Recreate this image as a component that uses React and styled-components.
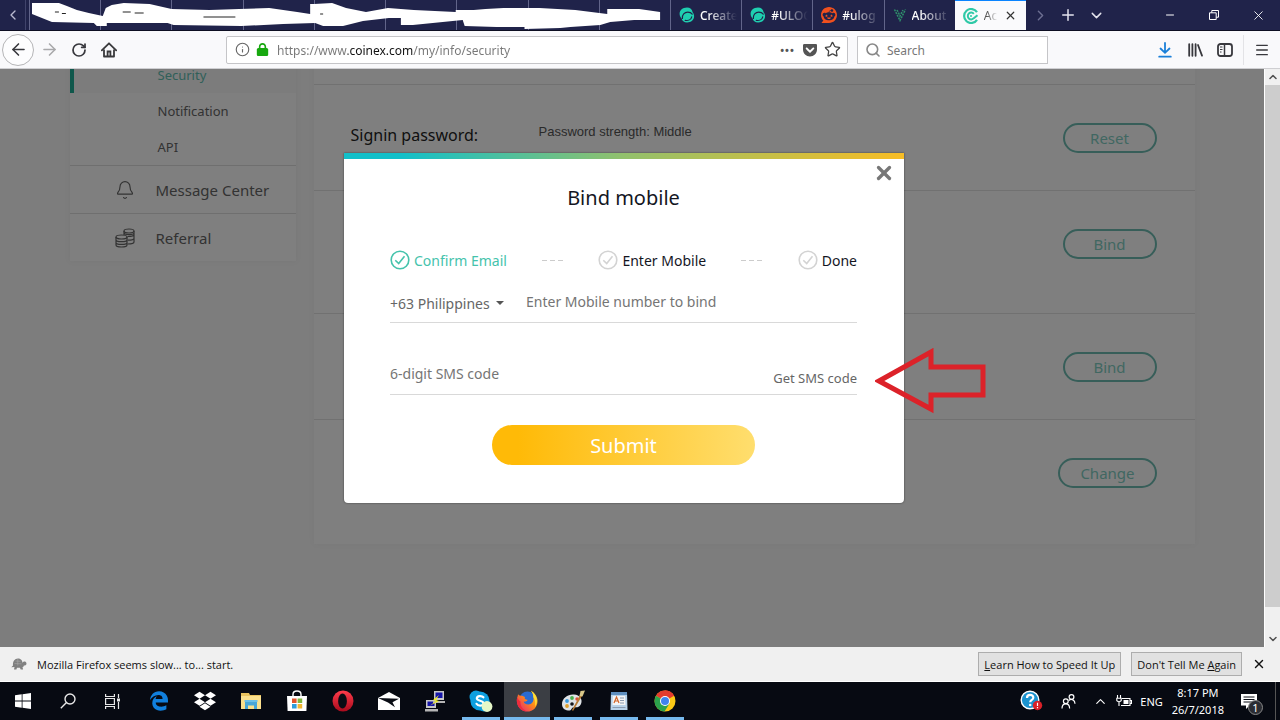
import React from "react";
import styled, { createGlobalStyle, css } from "styled-components";
import {
  ArrowLeft,
  ArrowRight,
  Bell,
  ChevronDown,
  ChevronLeft,
  ChevronRight,
  ChevronUp,
  Info,
  Menu,
  Minus,
  Plus,
  RotateCw,
  Search,
  Star,
  X,
} from "lucide-react";
import { FaDropbox, FaEdgeLegacy, FaGetPocket, FaLock, FaReddit } from "react-icons/fa6";

/* ---------- icons ---------- */

const SteemIcon = () => (
  <svg width="16" height="16" viewBox="0 0 16 16">
    <path
      d="M8 .6C3.600.6.6 3.400.6 6.800c0 2.200 1 3.500 1.900 4.500.4 2.500 2.600 4.200 5.600 4.200 4 0 7-2.800 7-6.200 0-2-.8-3.300-1.500-4.100C13.200 2.400 11.100.6 8 .6z"
      fill="#1fcfb0"
    />
    <path
      d="M3.400 11.500C3 7.800 5.500 5.200 8.800 5.200c2 0 3.600.8 4.400 2M6.200 13.300c3 .6 5.900-.8 6.500-3.500"
      fill="none"
      stroke="#20234a"
      strokeWidth="1.200"
      strokeLinecap="round"
    />
  </svg>
);

const VesselIcon = () => (
  <svg width="14" height="14" viewBox="0 0 14 14" fill="none" stroke="#2f8f6b" strokeWidth="1.500">
    <path d="M1.500 1.500 7 12.500l5.500-11M4 2l3 6 3-6" strokeDasharray="2 1" />
  </svg>
);

const CoinExIcon = () => (
  <svg width="16" height="16" viewBox="0 0 16 16" fill="none" stroke="#2fc9a7">
    <path d="M14 4.200A7 7 0 1 0 14 11.800" strokeWidth="2.200" />
    <path d="M10.800 5.800A3.400 3.400 0 1 0 10.800 10.200L14.500 7.200" strokeWidth="2" />
    <circle cx="8" cy="8" r="1" fill="#2fc9a7" stroke="none" />
  </svg>
);

const HomeIcon = () => (
  <svg width="16" height="16" viewBox="0 0 16 16" fill="none" stroke="#3a3a3c" strokeWidth="1.800">
    <path d="M.8 8.300 8 1.300l7.200 7" strokeLinecap="round" strokeLinejoin="round" />
    <path d="M3 7.500v7h10v-7" strokeLinejoin="round" />
    <path d="M6.600 14.500V9.500h2.800v5" />
  </svg>
);

const LibraryIcon = () => (
  <svg width="15" height="14" viewBox="0 0 15 14" fill="none" stroke="#38383d" strokeWidth="1.800" strokeLinecap="round">
    <path d="M1.200 1.200v11.600M4.400 1.200v11.600M7.600 1.200v11.600M10 2l4 10.600" />
  </svg>
);

const SidebarIcon = () => (
  <svg width="16" height="14" viewBox="0 0 16 14" fill="none" stroke="#38383d">
    <rect x="1" y="1" width="14" height="12" rx="2.500" strokeWidth="1.800" />
    <path d="M7.500 1v12" strokeWidth="1.500" />
    <path d="M3 4h2.500M3 6.500h2.500M3 9h1.500" strokeWidth="1" />
  </svg>
);

const DownloadIcon = () => (
  <svg width="14" height="16" viewBox="0 0 14 16" fill="none" stroke="#1a7fd8" strokeWidth="1.800" strokeLinecap="round">
    <path d="M7 1v9.500M2.500 6.500 7 10.800l4.500-4.300M1.200 14.700h11.600" />
  </svg>
);

const RestoreIcon = () => (
  <svg width="10" height="10" viewBox="0 0 10 10" fill="none" stroke="#fff">
    <path d="M.5 2.800h6.700v6.700H.5zM2.800 2.800V.5h6.700v6.700H7.200" />
  </svg>
);

const CoinsIcon = () => (
  <svg width="20" height="20" viewBox="0 0 20 20" fill="none" stroke="#666" strokeWidth="1.200">
    <ellipse cx="14" cy="3" rx="5" ry="2" />
    <path d="M9 3v4M19 3v11c0 1.200-2.500 2-6.500 2M19 6.500c0 1.200-2.500 2-6.500 2M19 10.200c0 1.200-2.500 2-6.500 2M9 5c.5 1 2 1.600 5 1.600s5-.8 5-1.800" />
    <ellipse cx="6.500" cy="9" rx="5.500" ry="2" />
    <path d="M1 9v8c0 1.200 2.400 2 5.500 2s5.500-.8 5.500-2V9M1 11.700c0 1.200 2.400 2 5.500 2s5.500-.8 5.500-2M1 14.400c0 1.200 2.400 2 5.500 2s5.500-.8 5.500-2" />
  </svg>
);

const StepIcon = ({ color }) => (
  <svg width="20" height="20" viewBox="0 0 20 20" fill="none" stroke={color} strokeWidth="1.600">
    <circle cx="10" cy="10" r="8.800" />
    <path d="m5.300 10.200 3.400 3.300 5.800-7.200" />
  </svg>
);

const TurtleIcon = () => (
  <svg width="16" height="14" viewBox="0 0 16 14" fill="#808080">
    <path d="M2 8.500C1.500 4.500 3.700 1.500 7 1.500S11.500 4 11.500 6c.3-1.200 1.300-1.700 2.300-1.500C15 4.700 15.800 6 15.400 7.200c-.3 1-1.500 1.300-2.500 1.200-.2 1-.8 1.500-1.400 1.700l.6 2.400h-2.400l-.8-1.800H6l-.6 1.800H3l.5-2.500L.3 10.300z" />
    <path d="m4.500 4 5 .3M3.500 6.500l7 .3M6.800 2v6.500" stroke="#a9a9a9" strokeWidth=".6" />
  </svg>
);

const WindowsIcon = () => (
  <svg width="16" height="16" viewBox="0 0 16 16" fill="#fff">
    <path d="M0 2.300 6.700 1.300v6.200H0zM7.500 1.200 16 0v7.500H7.500zM0 8.400h6.700v6.300L0 13.700zM7.500 8.400H16V16l-8.500-1.200z" />
  </svg>
);

const TaskSearchIcon = () => (
  <svg width="16" height="16" viewBox="0 0 16 16" fill="none" stroke="#e8e8e8" strokeWidth="1.400">
    <circle cx="10" cy="6" r="5" />
    <path d="M6.500 9.500.8 15.200" />
  </svg>
);

const TaskViewIcon = () => (
  <svg width="17" height="15" viewBox="0 0 17 15" fill="none" stroke="#e8e8e8" strokeWidth="1.200">
    <path d="M1.600 0v2.500h8.800V0M1.600 15v-2.500h8.800V15M1.600 4.500h8.800v6H1.600zM14.500 0v4M14.500 8v7" />
    <path d="M13 4.500h3v3h-3z" fill="#e8e8e8" stroke="none" />
  </svg>
);

const FolderIcon = () => (
  <svg width="22" height="18" viewBox="0 0 22 18">
    <path d="M1 1h8l1 2h11v14H1z" fill="#e9c25e" />
    <path d="M1 4h20v13H1z" fill="#fbe08d" />
    <path d="M5 9h12v8h-3v-3.500H8V17H5z" fill="#49a7d8" />
    <path d="M4.500 8h13v2h-13z" fill="#6cc0e8" />
  </svg>
);

const StoreIcon = () => (
  <svg width="22" height="22" viewBox="0 0 22 22">
    <path d="M7 7V4.500c0-4.600 8-4.600 8 0V7" fill="none" stroke="#fff" strokeWidth="1.400" />
    <path d="M1 6h20l-.6 15H1.600z" fill="#fff" />
    <path d="M6 8.500h4.600V13H6z" fill="#e1542c" />
    <path d="M11.600 8.500h4.600V13h-4.600z" fill="#7fb63c" />
    <path d="M6 14h4.600v4.500H6z" fill="#2d9cdb" />
    <path d="M11.600 14h4.600v4.500h-4.600z" fill="#f2b632" />
  </svg>
);

const OperaIcon = () => (
  <svg width="22" height="22" viewBox="0 0 22 22">
    <defs>
      <linearGradient id="opera" x1="0" y1="0" x2="0" y2="1">
        <stop offset="0" stopColor="#ff3c4b" />
        <stop offset="1" stopColor="#a80a1c" />
      </linearGradient>
    </defs>
    <circle cx="11" cy="11" r="10.500" fill="url(#opera)" />
    <ellipse cx="10.500" cy="11" rx="4.400" ry="7.600" fill="#090c14" />
  </svg>
);

const MailIcon = () => (
  <svg width="24" height="20" viewBox="0 0 24 20">
    <path d="M1 7 12 1l11 6v12H1z" fill="#fff" />
    <path d="m1 7 21 .8-6.500 3.500 2.500 5L11 11.500z" fill="#090c14" />
  </svg>
);

const PuttyIcon = () => (
  <svg width="22" height="22" viewBox="0 0 22 22">
    <path d="M10 1h10v9H10zM2 10h10v8H2z" fill="#c8c8c8" />
    <path d="M11.500 2.500h7v5.500h-7zM3.500 11.500h7v4.500h-7z" fill="#1515a8" />
    <path d="M9 11h12v2H9zM1 19h13v2.500H1z" fill="#b5b5b5" />
    <path d="m15 5-6 5 3 1-6 4.500 9-4.500-3-1z" fill="#f4ee1e" />
  </svg>
);

const SkypeIcon = () => (
  <svg width="24" height="22" viewBox="0 0 24 22">
    <circle cx="7" cy="7" r="6.500" fill="#0e9fdf" />
    <circle cx="11" cy="11" r="9.600" fill="#0e9fdf" />
    <circle cx="15" cy="15" r="6.500" fill="#0e9fdf" />
    <path
      d="M14.400 7.300C13 5.500 8 5.500 7.800 8.300c-.1 3 6.800 1.800 6.700 5-.1 3-5.600 3-7 .5"
      fill="none"
      stroke="#fff"
      strokeWidth="2.200"
      strokeLinecap="round"
    />
    <circle cx="18" cy="16.500" r="5.400" fill="#e5f8c8" />
  </svg>
);

const FirefoxIcon = () => (
  <svg width="22" height="22" viewBox="0 0 22 22">
    <defs>
      <linearGradient id="fox" x1="1" y1="0" x2="0" y2="1">
        <stop offset="0" stopColor="#ffd52e" />
        <stop offset=".45" stopColor="#ff8a16" />
        <stop offset="1" stopColor="#e31587" />
      </linearGradient>
    </defs>
    <circle cx="11.500" cy="9.500" r="8" fill="#2a6bd0" />
    <path
      d="M2 4c0 1-.2 2-.8 3.500C-.5 14 3.500 21.500 11 21.500S22.500 15 21.300 9C20.700 5.500 18 2.500 15 .8c1.500 2 2.500 4 2.300 6.200.8 3-.3 7.500-5 7.500-3 0-4.800-1.700-4.500-3 1.500.5 3-.3 3.800-1.600-2.800-.3-3.300-1.400-2.600-3C7 6 5.500 5.500 4.800 5.700 3.500 5.500 2.500 5 2 4z"
      fill="url(#fox)"
    />
    <path d="M15 .8c6 4 7.500 10.500 4 16 .5-4 .3-7-1.700-9.800C17.500 4.800 16.500 2.800 15 .8z" fill="#ffdf35" />
    <path d="M1.200 7.500C-.5 14 3.500 21.500 11 21.500c-4-2-7-5-6.500-10C3 10.500 2 9 1.200 7.500z" fill="#ee2c3c" />
  </svg>
);

const PaintIcon = () => (
  <svg width="24" height="22" viewBox="0 0 24 22">
    <path d="M1 14C1 8 7 4 13 4.500s9 5 7 9.500-6 3-8 3.500-1 3.500-5 3-6-3-6-6.500z" fill="#dfe3e6" />
    <circle cx="6" cy="11" r="1.900" fill="#3a9be0" />
    <circle cx="11" cy="8" r="1.900" fill="#48b04b" />
    <circle cx="6" cy="16" r="1.900" fill="#e0a12d" />
    <circle cx="16" cy="9" r="1.700" fill="#dd4b39" />
    <circle cx="11" cy="14" r="1.800" fill="#14161c" />
    <path d="m11 20 8-15 2 1-9 15z" fill="#b87a33" />
    <path d="m18.500 6 1-5 4.500-.5-2.500 6z" fill="#d9c88a" />
  </svg>
);

const WordpadIcon = () => (
  <svg width="18" height="20" viewBox="0 0 18 20">
    <path d="M1 1h16l.5 18H.5z" fill="#b9d3ea" />
    <path d="M1 1h16v3H1z" fill="#5f8fbf" />
    <path d="M3 5h12l.5 9H2.500z" fill="#f5f5f5" />
    <path d="m4 12 2.500-6L9 12M5 10h3" fill="none" stroke="#d2662b" strokeWidth="1.200" />
    <path d="M10 7h4M10 9.500h4M10 12h4M2.500 16.500h13" stroke="#8a9bb0" />
  </svg>
);

const ChromeIcon = () => (
  <svg width="22" height="22" viewBox="0 0 22 22">
    <circle cx="11" cy="11" r="10.500" fill="#fbc916" />
    <path d="M11 11 1.900 5.800A10.500 10.500 0 0 1 20.100 5.800z" fill="#e33b2e" />
    <path d="M11 5.800h9.100A10.500 10.500 0 0 0 11 .5z" fill="#e33b2e" />
    <path d="M1.900 5.800A10.500 10.500 0 0 0 10.500 21.500L15.500 13.500 11 11z" fill="#2ba24c" />
    <circle cx="11" cy="11" r="5" fill="#fff" />
    <circle cx="11" cy="11" r="4" fill="#3f82ee" />
  </svg>
);

const HelpIcon = () => (
  <svg width="24" height="22" viewBox="0 0 24 22">
    <circle cx="10" cy="10" r="8.800" fill="#1b93cf" stroke="#fff" strokeWidth="1.400" />
    <path
      d="M7 8c0-4 6.500-4 6.300-.3C13.200 10 10.200 9.800 10.200 12.300"
      fill="none"
      stroke="#fff"
      strokeWidth="2.200"
    />
    <circle cx="10.200" cy="15" r="1.300" fill="#fff" />
    <circle cx="17.500" cy="15.500" r="4.700" fill="#da2128" />
    <path d="M17.500 12.700v3.300M17.500 17v1.300" stroke="#fff" strokeWidth="1.200" />
  </svg>
);

const PeopleIcon = () => (
  <svg width="15" height="15" viewBox="0 0 15 15" fill="none" stroke="#fff" strokeWidth="1.200">
    <circle cx="4.800" cy="7.300" r="2.400" />
    <path d="M1 14.500c0-6.300 7.600-6.300 7.600 0" />
    <circle cx="10.500" cy="3" r="2.400" />
    <path d="M7.800 6.500C10.500 4.300 14 6 14 9.700" />
  </svg>
);

const BatteryIcon = () => (
  <svg width="16" height="13" viewBox="0 0 16 13" fill="none" stroke="#fff" strokeWidth="1.100">
    <path d="M6 3.500h8v7H5M14.500 5.500h1v3h-1" />
    <path d="M7.500 5h5v4h-5z" fill="#fff" stroke="none" />
    <path d="M1.500 0v3M4.500 0v3M.8 3.200h4.400v2.500L3 7 .8 5.700zM3 7v4" />
  </svg>
);

const ActionIcon = () => (
  <svg width="16" height="15" viewBox="0 0 16 15">
    <path d="M0 0h16v11.500H8.500L5 15v-3.500H0z" fill="#fff" />
    <path d="M2.500 3h11M2.500 5.500h11M2.500 8h11" stroke="#0a0d15" />
  </svg>
);

const Scribble = () => (
  <ScribbleSvg viewBox="0 0 640 31" preserveAspectRatio="none" aria-hidden="true">
    <path
      d="M3 3h27l8 3 10 4 12 3 14 3 3-8 6-3 12-2 26 1 22 5 38 1 30-1 30-1 28 4 13 2V4h4l18-1 14 5 20 4 22-4 26 2 42 2v-2h18l12-1 18-1h36l36 2 32 4V9h32l21 3v8h-26l-24 2-10 3-30 2-10 1-36 1v-2h-28l-32-1-2-6-20 2-30 3h-12v-7h-12l-26 3-20 5h-20l-8-3-32 1-42 2-68-1-6-2H78v3H68l-3-3-42-1L3 14z"
      fill="#fff"
    />
    <path d="M26 12h4M33 13.500h4M94 12h8M106 13h9M175 17h32M292 14h3" stroke="#222" strokeWidth="1" fill="none" />
  </ScribbleSvg>
);

/* ---------- data ---------- */

const hiddenTabs = [1, 2, 3, 4, 5, 6, 7, 8, 9];

const openTabs = [
  { icon: <SteemIcon />, name: "Create" },
  { icon: <SteemIcon />, name: "#ULOG" },
  { icon: <FaReddit size={16} color="#f0501e" />, name: "#ulog" },
  { icon: <VesselIcon />, name: "About" },
];

const securityRows = [
  { label: "Signin password:", value: "Password strength: Middle", action: "Reset", height: 106 },
  { action: "Bind", height: 123 },
  { action: "Bind", height: 106 },
  { action: "Change", height: 124 },
];

const apps = [
  { name: "Edge", icon: <FaEdgeLegacy size={20} color="#1180dd" /> },
  { name: "Dropbox", icon: <FaDropbox size={22} color="#fff" /> },
  { name: "File Explorer", icon: <FolderIcon /> },
  { name: "Store", icon: <StoreIcon /> },
  { name: "Opera", icon: <OperaIcon /> },
  { name: "Mail", icon: <MailIcon /> },
  { name: "PuTTY", icon: <PuttyIcon /> },
  { name: "Skype", icon: <SkypeIcon />, running: true },
  { name: "Firefox", icon: <FirefoxIcon />, running: true, active: true },
  { name: "Paint", icon: <PaintIcon />, running: true },
  { name: "WordPad", icon: <WordpadIcon />, running: true },
  { name: "Chrome", icon: <ChromeIcon />, running: true },
];

/* ---------- sections ---------- */

const TabBar = () => (
  <StyledTabBar>
    <ScrollLeft aria-label="Scroll tabs left">
      <ChevronLeft size={16} />
    </ScrollLeft>
    <Tabs>
      {hiddenTabs.map((id) => (
        <Tab key={id} aria-label={`Tab ${id}`} />
      ))}
      {openTabs.map(({ icon, name }) => (
        <Tab key={name}>
          {icon}
          <TabTitle>{name}</TabTitle>
        </Tab>
      ))}
      <Tab $active>
        <CoinExIcon />
        <TabTitle $active>Acc</TabTitle>
        <X size={13} color="#333" strokeWidth={2.2} />
      </Tab>
      <Scribble />
    </Tabs>
    <TabTools>
      <TabTool $dim aria-label="Scroll tabs right">
        <ChevronRight size={17} />
      </TabTool>
      <TabTool aria-label="New tab">
        <Plus size={18} />
      </TabTool>
      <TabTool aria-label="List all tabs">
        <ChevronDown size={17} />
      </TabTool>
    </TabTools>
    <WindowButton aria-label="Minimize">
      <Minus size={12} />
    </WindowButton>
    <WindowButton aria-label="Restore">
      <RestoreIcon />
    </WindowButton>
    <WindowButton aria-label="Close">
      <X size={15} strokeWidth={1.4} />
    </WindowButton>
  </StyledTabBar>
);

const Toolbar = () => (
  <StyledToolbar>
    <NavButtons>
      <BackButton aria-label="Back">
        <ArrowLeft size={19} />
      </BackButton>
      <IconButton aria-label="Forward">
        <ArrowRight size={19} color="#a9a9ab" />
      </IconButton>
      <IconButton aria-label="Reload">
        <RotateCw size={16} strokeWidth={2.6} />
      </IconButton>
      <IconButton aria-label="Home">
        <HomeIcon />
      </IconButton>
    </NavButtons>
    <UrlBox>
      <Info size={15} color="#666" strokeWidth={1.8} />
      <FaLock size={13} color="#17a80f" />
      <UrlInput aria-label="Address" defaultValue="https://www.coinex.com/my/info/security" />
      <Dots aria-label="Page actions">•••</Dots>
      <FaGetPocket size={16} color="#555" />
      <Star size={17} color="#444" strokeWidth={1.8} />
    </UrlBox>
    <SearchBox>
      <Search size={16} color="#888" strokeWidth={2.4} />
      <SearchInput aria-label="Search" placeholder="Search" />
    </SearchBox>
    <ToolButtons>
      <IconButton aria-label="Downloads">
        <DownloadIcon />
      </IconButton>
      <IconButton aria-label="Library">
        <LibraryIcon />
      </IconButton>
      <IconButton aria-label="Sidebars">
        <SidebarIcon />
      </IconButton>
      <MenuButton aria-label="Menu">
        <Menu size={16} />
      </MenuButton>
    </ToolButtons>
  </StyledToolbar>
);

const SideNav = () => (
  <StyledSideNav>
    <SubLink href="#security" $active>
      Security
    </SubLink>
    <SubLink href="#notification">Notification</SubLink>
    <SubLink href="#api">API</SubLink>
    <MainLink href="#messages">
      <Bell size={20} strokeWidth={1.4} />
      Message Center
    </MainLink>
    <MainLink href="#referral">
      <CoinsIcon />
      Referral
    </MainLink>
  </StyledSideNav>
);

const BindDialog = () => (
  <Dialog role="dialog" aria-labelledby="bind-title">
    <CloseButton aria-label="Close">
      <X size={22} strokeWidth={3.6} />
    </CloseButton>
    <Title id="bind-title">Bind mobile</Title>
    <Steps>
      <Step $active>
        <StepIcon color="#45c3ac" />
        Confirm Email
      </Step>
      <Dashes />
      <Step>
        <StepIcon color="#d3d3d3" />
        Enter Mobile
      </Step>
      <Dashes />
      <Step>
        <StepIcon color="#d3d3d3" />
        Done
      </Step>
    </Steps>
    <Field>
      <Country aria-label="Country code" defaultValue="63">
        <option value="63">+63 Philippines</option>
      </Country>
      <Caret viewBox="0 0 8 4" aria-hidden="true">
        <path d="M0 0h8L4 4z" fill="#555" />
      </Caret>
      <TextInput aria-label="Mobile number" placeholder="Enter Mobile number to bind" />
    </Field>
    <Field $spaced>
      <TextInput aria-label="SMS code" placeholder="6-digit SMS code" />
      <SmsButton>Get SMS code</SmsButton>
    </Field>
    <Submit>Submit</Submit>
    <RedArrow viewBox="0 0 112 66" aria-hidden="true">
      <path d="M4 33 56 4v15h52v28H56v14z" fill="none" stroke="#dc2229" strokeWidth="5" />
    </RedArrow>
  </Dialog>
);

const Taskbar = () => (
  <StyledTaskbar>
    <StartGroup>
      <SystemButton aria-label="Start">
        <WindowsIcon />
      </SystemButton>
      <SystemButton aria-label="Search Windows">
        <TaskSearchIcon />
      </SystemButton>
      <SystemButton aria-label="Task view">
        <TaskViewIcon />
      </SystemButton>
    </StartGroup>
    {apps.map(({ name, icon, running, active }) => (
      <AppButton key={name} aria-label={name} $running={running} $active={active}>
        {icon}
      </AppButton>
    ))}
    <Tray>
      <HelpIcon />
      <PeopleIcon />
      <TrayGroup>
        <ChevronUp size={15} strokeWidth={1.8} />
        <BatteryIcon />
        <span>ENG</span>
      </TrayGroup>
      <Clock>
        <span>8:17 PM</span>
        <span>26/7/2018</span>
      </Clock>
      <Notifications aria-label="Notifications">
        <ActionIcon />
        <Badge>1</Badge>
      </Notifications>
    </Tray>
  </StyledTaskbar>
);

const App = () => (
  <Screen>
    <GlobalStyle />
    <TabBar />
    <Toolbar />
    <Viewport>
      <Page>
        <PageLayout>
          <SideNav />
          <Panel>
            <Row $height={30} />
            {securityRows.map(({ label, value, action, height }, i) => (
              <Row key={i} $height={height}>
                <RowLabel>{label}</RowLabel>
                <RowValue>{value}</RowValue>
                <RowButton>{action}</RowButton>
              </Row>
            ))}
          </Panel>
        </PageLayout>
        <Overlay>
          <BindDialog />
        </Overlay>
      </Page>
      <ScrollBar>
        <ChevronUp size={12} strokeWidth={3} />
        <Thumb />
        <ChevronDown size={12} strokeWidth={3} />
      </ScrollBar>
    </Viewport>
    <Notice>
      <TurtleIcon />
      <NoticeText>Mozilla Firefox seems slow... to... start.</NoticeText>
      <NoticeButton>
        <u>L</u>earn How to Speed It Up
      </NoticeButton>
      <NoticeButton>
        Don't Tell Me <u>A</u>gain
      </NoticeButton>
      <NoticeClose aria-label="Dismiss">
        <X size={14} strokeWidth={2.4} />
      </NoticeClose>
    </Notice>
    <Taskbar />
  </Screen>
);

/* ---------- styles ---------- */

const GlobalStyle = createGlobalStyle`
  * {
    box-sizing: border-box;
  }
  body {
    margin: 0;
    font-family: "Noto Sans", "Open Sans", sans-serif;
  }
  button, input, select {
    margin: 0;
    padding: 0;
    border: none;
    outline: none;
    background: none;
    font-family: inherit;
    color: inherit;
  }
  svg {
    flex-shrink: 0;
  }
`;

const center = css`
  display: flex;
  align-items: center;
  justify-content: center;
`;

const Screen = styled.div`
  display: flex;
  flex-direction: column;
  height: 100vh;
  overflow: hidden;
`;

const StyledTabBar = styled.header`
  display: flex;
  height: 31px;
  background: #20234a;
  border-bottom: 1px solid #0d0e22;
`;

const ScrollLeft = styled.button`
  ${center}
  width: 26px;
  margin-right: 3px;
  color: #b9bad0;
  border-right: 1px solid #41446b;
`;

const Tabs = styled.div`
  position: relative;
  display: grid;
  grid-template-columns: repeat(14, minmax(0, 1fr));
  flex: 1;
  min-width: 0;
`;

const Tab = styled.button`
  display: flex;
  align-items: center;
  gap: 5px;
  min-width: 0;
  padding-left: 8px;
  overflow: hidden;
  border-left: 1px solid #62658a;
  ${({ $active }) =>
    $active &&
    css`
      padding-right: 9px;
      background: #fafafc;
      border-left: none;
      border-top: 1px solid #0a84ff;
    `}
`;

const TabTitle = styled.span`
  flex: 1;
  overflow: hidden;
  white-space: nowrap;
  text-align: left;
  font-size: 12px;
  font-weight: ${({ $active }) => ($active ? 400 : 500)};
  color: ${({ $active }) => ($active ? "#555" : "#fff")};
  mask-image: linear-gradient(90deg, #000 20%, transparent 90%);
`;

const ScribbleSvg = styled.svg`
  position: absolute;
  left: 0;
  top: 0;
  width: 64%;
  height: 31px;
  pointer-events: none;
`;

const TabTools = styled.div`
  display: flex;
  width: 122px;
`;

const TabTool = styled.button`
  ${center}
  width: 28px;
  color: ${({ $dim }) => ($dim ? "#6d6f92" : "#e4e4ee")};
`;

const WindowButton = styled.button`
  ${center}
  width: 44px;
  color: #fff;
`;

const StyledToolbar = styled.div`
  display: flex;
  align-items: center;
  height: 38px;
  background: #f9f9fb;
  border-bottom: 1px solid #cfcfd2;
`;

const NavButtons = styled.nav`
  display: flex;
  align-items: center;
  width: 226px;
  padding-left: 2px;
`;

const IconButton = styled.button`
  ${center}
  width: 30px;
  height: 30px;
  color: #38383d;
`;

const BackButton = styled(IconButton)`
  width: 32px;
  height: 32px;
  border: 1px solid #b5b5b7;
  border-radius: 50%;
  background: #fdfdfe;
`;

const UrlBox = styled.div`
  display: flex;
  align-items: center;
  gap: 6px;
  flex: 1;
  height: 28px;
  padding: 0 6px 0 8px;
  background: #fff;
  border: 1px solid #c5c5c8;
  border-radius: 2px;
`;

const UrlInput = styled.input`
  flex: 1;
  min-width: 0;
  height: 24px;
  padding: 2px 0 0 2px;
  font-size: 12px;
  color: transparent;
  background: linear-gradient(90deg, #777 73px, #111 73px, #111 138px, #777 138px);
  background-clip: text;
`;

const Dots = styled.button`
  width: 24px;
  margin-right: -3px;
  font-size: 13px;
  color: #555;
`;

const SearchBox = styled.div`
  display: flex;
  align-items: center;
  gap: 6px;
  width: 191px;
  height: 28px;
  margin-left: 9px;
  padding: 0 7px;
  background: #fff;
  border: 1px solid #c5c5c8;
`;

const SearchInput = styled.input`
  flex: 1;
  min-width: 0;
  height: 24px;
  padding-top: 2px;
  font-size: 12px;
  &::placeholder {
    color: #777;
    opacity: 1;
  }
`;

const ToolButtons = styled.div`
  display: flex;
  justify-content: flex-end;
  width: 232px;
`;

const MenuButton = styled(IconButton)`
  width: 37px;
  margin-left: 3px;
  border-left: 1px solid #e3e3e6;
`;

const Viewport = styled.div`
  display: flex;
  flex: 1;
  min-height: 0;
`;

const Page = styled.main`
  position: relative;
  flex: 1;
  min-width: 0;
  overflow: hidden;
  background: #fafafa;
  font-size: 15px;
`;

const PageLayout = styled.div`
  display: flex;
  align-items: flex-start;
  gap: 18px;
  max-width: 1125px;
  margin: -14px auto 0;
`;

const StyledSideNav = styled.nav`
  display: flex;
  flex-direction: column;
  width: 226px;
  padding-top: 2px;
  background: #fff;
  box-shadow: 0 0 6px #eee;
`;

const SubLink = styled.a`
  display: flex;
  align-items: center;
  height: 36px;
  padding-left: 84px;
  border-left: 4px solid ${({ $active }) => ($active ? "#1fae96" : "transparent")};
  background: ${({ $active }) => ($active ? "#f9f9f9" : "none")};
  color: ${({ $active }) => ($active ? "#62c0b3" : "#666")};
  font-size: 13px;
  text-decoration: none;
`;

const MainLink = styled.a`
  display: flex;
  align-items: center;
  gap: 21px;
  height: 48px;
  padding-left: 45px;
  border-top: 1px solid #dedede;
  color: #666;
  text-decoration: none;
`;

const Panel = styled.section`
  flex: 1;
  background: #fff;
  box-shadow: 0 0 6px #f2f2f2;
`;

const Row = styled.div`
  display: flex;
  align-items: flex-start;
  height: ${({ $height }) => $height}px;
  padding: 38px 38px 0 37px;
  border-bottom: 1px solid #e2e2e2;
  &:last-child {
    border-bottom: none;
  }
  &:first-child {
    padding: 0;
  }
`;

const RowLabel = styled.span`
  width: 188px;
  font-size: 16px;
  line-height: 24px;
  color: #222;
`;

const RowValue = styled.span`
  flex: 1;
  font-family: "Liberation Sans", Arial, sans-serif;
  font-size: 13px;
  line-height: 18px;
  color: #555;
`;

const RowButton = styled.button`
  height: 30px;
  min-width: 94px;
  padding: 0 20px;
  border: 2px solid #6fbdb3;
  border-radius: 15px;
  color: #82cfc4;
  font-size: 15px;
  line-height: 26px;
`;

const Overlay = styled.div`
  position: absolute;
  inset: 0;
  display: flex;
  align-items: flex-start;
  justify-content: center;
  padding: 84px 16px 0 0;
  background: rgba(0, 0, 0, 0.5);
`;

const Dialog = styled.div`
  position: relative;
  display: flex;
  flex-direction: column;
  width: 560px;
  padding: 30px 47px 38px 46px;
  border-radius: 0 0 4px 4px;
  background: linear-gradient(90deg, #12bfc9 10%, #92c06c 50%, #f7bd25) 0 0 / 100% 6px no-repeat, #fff;
  box-shadow: 0 0 2px rgba(0, 0, 0, 0.6);
`;

const CloseButton = styled.button`
  ${center}
  position: absolute;
  top: 9px;
  right: 9px;
  color: #777;
`;

const Title = styled.h1`
  margin: 0 0 35px;
  text-align: center;
  font-size: 20px;
  font-weight: 400;
  line-height: 30px;
  color: #14161f;
`;

const Steps = styled.div`
  display: flex;
  align-items: center;
  justify-content: space-between;
  height: 24px;
  margin-bottom: 12px;
`;

const Step = styled.div`
  display: flex;
  align-items: center;
  gap: 4px;
  font-size: 14px;
  color: ${({ $active }) => ($active ? "#45c3ac" : "#14161f")};
`;

const Dashes = styled.span`
  width: 22px;
  height: 1px;
  background: repeating-linear-gradient(90deg, #ccc 0 5px, transparent 5px 8px);
`;

const Field = styled.div`
  display: flex;
  align-items: center;
  height: 39px;
  margin-top: ${({ $spaced }) => ($spaced ? "33px" : "0")};
  border-bottom: 1px solid #d9d9d9;
`;

const Country = styled.select`
  appearance: none;
  width: 106px;
  font-size: 14px;
  color: #666;
`;

const Caret = styled.svg`
  width: 8px;
  height: 4px;
  margin-right: 22px;
  pointer-events: none;
`;

const TextInput = styled.input`
  flex: 1;
  min-width: 0;
  height: 38px;
  padding-bottom: 4px;
  font-size: 14px;
  &::placeholder {
    color: #757575;
    opacity: 1;
  }
`;

const SmsButton = styled.button`
  align-self: flex-end;
  height: 32px;
  font-size: 13px;
  color: #666;
`;

const Submit = styled.button`
  align-self: center;
  width: 263px;
  height: 40px;
  margin-top: 30px;
  border-radius: 20px;
  background: linear-gradient(90deg, #ffba07 10%, #ffde6e);
  color: #fff;
  font-size: 20px;
`;

const RedArrow = styled.svg`
  position: absolute;
  top: 195px;
  right: -83px;
  width: 112px;
  height: 66px;
`;

const ScrollBar = styled.div`
  display: flex;
  flex-direction: column;
  align-items: center;
  width: 16px;
  padding: 2px 0;
  background: #f0f0f0;
  border-left: 1px solid #fff;
  color: #505050;
`;

const Thumb = styled.div`
  width: 15px;
  height: 91%;
  margin: 2px 0 auto;
  background: #cdcdcd;
`;

const Notice = styled.div`
  display: flex;
  align-items: center;
  height: 35px;
  padding: 0 14px 0 11px;
  background: #f0f0f0;
  border-bottom: 1px solid #fff;
  font-family: "Open Sans", "Noto Sans", sans-serif;
  font-size: 11px;
  color: #111;
`;

const NoticeText = styled.span`
  flex: 1;
  padding-left: 10px;
`;

const NoticeButton = styled.button`
  height: 24px;
  margin-right: 10px;
  padding: 0 5px;
  border: 1px solid #adadad;
  background: #e1e1e1;
  font-size: 11px;
`;

const NoticeClose = styled.button`
  ${center}
`;

const StyledTaskbar = styled.footer`
  display: flex;
  height: 38px;
  background: #070a12;
  color: #fff;
`;

const StartGroup = styled.div`
  display: flex;
  margin-right: 1px;
`;

const SystemButton = styled.button`
  ${center}
  width: 45px;
`;

const AppButton = styled.button`
  ${center}
  width: 46px;
  background: ${({ $active }) => ($active ? "#3b3e44" : "none")};
  ${({ $running, $active }) =>
    $running &&
    css`
      background-image: linear-gradient(#76b9ed, #76b9ed);
      background-size: ${$active ? "100%" : "38px"} 3px;
      background-position: bottom;
      background-repeat: no-repeat;
    `}
`;

const Tray = styled.div`
  display: flex;
  align-items: center;
  gap: 17px;
  margin-left: auto;
  font-size: 11px;
`;

const TrayGroup = styled.div`
  display: flex;
  align-items: center;
  gap: 8px;
`;

const Clock = styled.div`
  display: flex;
  flex-direction: column;
  align-items: center;
  margin-left: -8px;
  line-height: 17px;
`;

const Notifications = styled.button`
  ${center}
  position: relative;
  height: 38px;
  padding-right: 18px;
  margin-right: 4px;
  border-right: 1px solid #555;
`;

const Badge = styled.span`
  ${center}
  position: absolute;
  left: 7px;
  top: 18px;
  width: 15px;
  height: 15px;
  border: 1px solid #888;
  border-radius: 50%;
  background: #2b2d33;
  color: #fff;
  font-size: 11px;
`;

export default App;
